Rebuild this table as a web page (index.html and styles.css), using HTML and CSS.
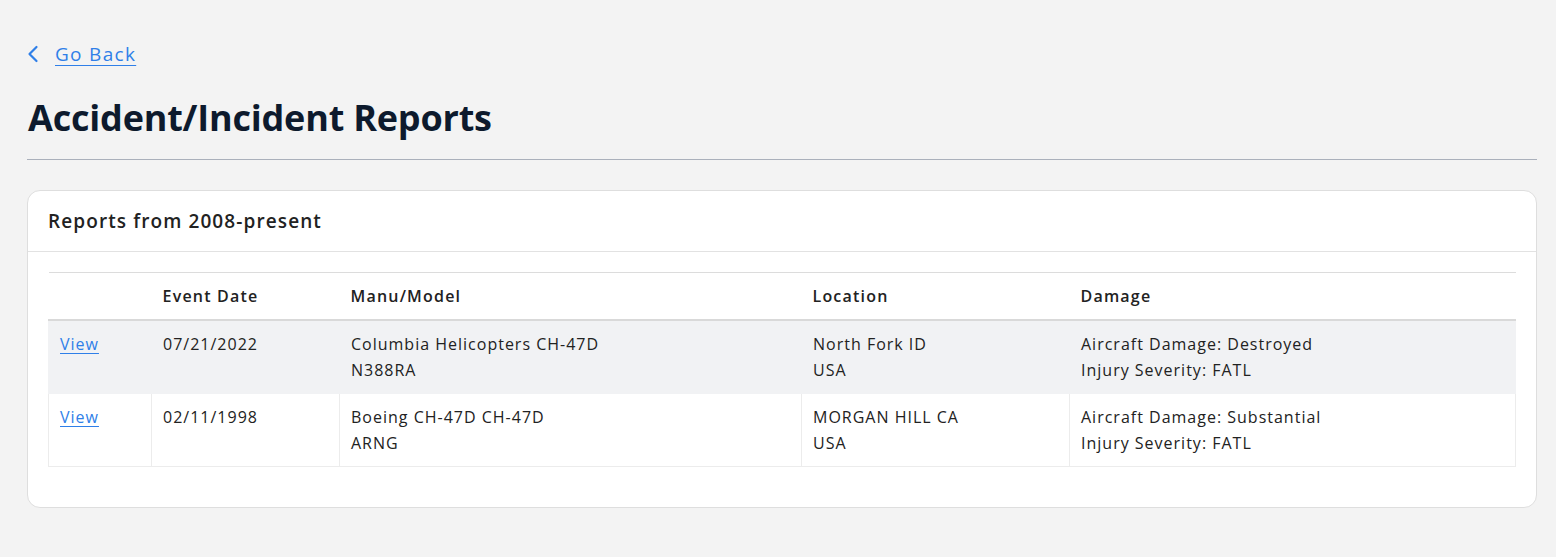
FILE: index.html
```html
<!DOCTYPE html>
<html lang="en">
<head>
<meta charset="utf-8">
<title>Accident/Incident Reports</title>
<link rel="stylesheet" href="styles.css">
</head>
<body>
<main class="page">
  <a class="back" href="#">
    <svg class="back-icon" viewBox="0 0 12 18" width="12" height="18" aria-hidden="true"><path d="M9.5 2 L2.5 9 L9.5 16" fill="none" stroke="currentColor" stroke-width="2.2" stroke-linecap="round" stroke-linejoin="round"/></svg>
    <span class="back-text">Go Back</span>
  </a>
  <h1 class="title">Accident/Incident Reports</h1>
  <hr class="rule">
  <section class="card">
    <div class="card-header">Reports from 2008-present</div>
    <div class="card-body">
      <table class="reports">
        <colgroup>
          <col class="c1"><col class="c2"><col class="c3"><col class="c4"><col class="c5">
        </colgroup>
        <thead>
          <tr><th></th><th>Event Date</th><th>Manu/Model</th><th>Location</th><th>Damage</th></tr>
        </thead>
        <tbody>
          <tr class="striped">
            <td><a href="#" class="view">View</a></td>
            <td>07/21/2022</td>
            <td>Columbia Helicopters CH-47D<br>N388RA</td>
            <td>North Fork ID<br>USA</td>
            <td>Aircraft Damage: Destroyed<br>Injury Severity: FATL</td>
          </tr>
          <tr>
            <td><a href="#" class="view">View</a></td>
            <td>02/11/1998</td>
            <td>Boeing CH-47D CH-47D<br>ARNG</td>
            <td>MORGAN HILL CA<br>USA</td>
            <td>Aircraft Damage: Substantial<br>Injury Severity: FATL</td>
          </tr>
        </tbody>
      </table>
    </div>
  </section>
</main>
</body>
</html>
```
FILE: styles.css
```css
html, body {
  margin: 0;
  padding: 0;
  background: #f3f3f3;
}
body {
  font-family: "Open Sans", "Noto Sans", "Liberation Sans", sans-serif;
  color: #222;
}
.page {
  padding: 40px 19px 0 27px;
}
.back {
  display: inline-flex;
  align-items: center;
  gap: 16px;
  color: #2f7fe8;
  text-decoration: none;
  font-size: 19px;
  line-height: 28px;
  letter-spacing: 1.3px;
}
.back-icon {
  display: block;
}
.back-text {
  text-decoration: underline;
  text-underline-offset: 4px;
  text-decoration-thickness: 1px;
}
.title {
  margin: 25px 0 0 1px;
  font-size: 36px;
  line-height: 50px;
  font-weight: 700;
  color: #0d1a2d;
  letter-spacing: -0.2px;
}
.rule {
  margin: 16px 0 30px 0;
  border: 0;
  border-top: 1px solid #aab0bb;
  height: 0;
}
.card {
  background: #fff;
  border: 1px solid #dedede;
  border-radius: 13px;
  width: 1508px;
}
.card-header {
  padding: 17px 20px 16px;
  font-size: 19px;
  line-height: 27px;
  font-weight: 600;
  letter-spacing: 1.1px;
  color: #222;
  border-bottom: 1px solid #e2e2e2;
}
.card-body {
  padding: 20px 20px 40px;
}
.reports {
  width: 100%;
  border-collapse: collapse;
  font-size: 16px;
  line-height: 26px;
  letter-spacing: 1px;
  border-top: 1px solid #dcdcdc;
}
.c1 { width: 103px; }
.c2 { width: 188px; }
.c3 { width: 462px; }
.c4 { width: 268px; }
.reports th {
  text-align: left;
  font-weight: 600;
  letter-spacing: 1.2px;
  padding: 10px 11px 10px;
  border-bottom: 2px solid #d9d9d9;
  color: #222;
}
.reports td {
  vertical-align: top;
  padding: 10px 11px 10px;
  border: 1px solid #ececec;
  border-top: 0;
}
.reports .striped td {
  background: #f1f2f4;
  border-left-color: #f1f2f4;
  border-right-color: #f1f2f4;
  border-bottom-color: #f1f2f4;
}
.view {
  color: #2f7fe8;
  text-decoration: underline;
  text-underline-offset: 3px;
}
```
